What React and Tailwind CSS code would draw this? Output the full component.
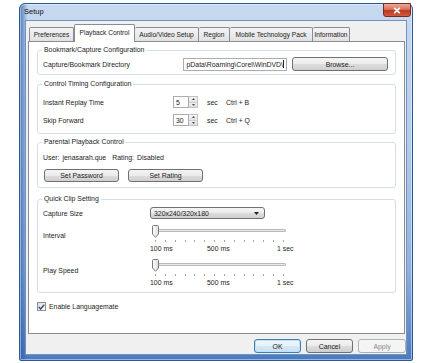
import React from "react";

const btnBg =
  "border border-[#707070] rounded-[3px] bg-[linear-gradient(to_bottom,#f4f4f4_0%,#ebebeb_50%,#dddddd_51%,#cfcfcf_100%)]";

function Group({ title, className, children }) {
  return (
    <fieldset className={`border border-[#d5dfe5] rounded-[3px] ${className}`}>
      <legend className="ml-[4px] px-[2px] leading-[10px]">{title}</legend>
      {children}
    </fieldset>
  );
}

function Spin({ value }) {
  return (
    <div className="flex h-[12px]">
      <div className="w-[16px] h-[12px] border border-[#abadb3] bg-white flex items-center pl-[2px] leading-[9px]">
        {value}
      </div>
      <div className="w-[9px] h-[12px] flex flex-col border border-l-0 border-[#c3c3c3]">
        <div className="flex-1 flex items-center justify-center bg-[linear-gradient(to_bottom,#f7f7f7,#e2e2e2)] border-b border-[#cfcfcf]">
          <svg width="3" height="2" viewBox="0 0 3 2"><path d="M0 2 L1.5 0 L3 2Z" fill="#4d4d4d" /></svg>
        </div>
        <div className="flex-1 flex items-center justify-center bg-[linear-gradient(to_bottom,#f0f0f0,#dedede)]">
          <svg width="3" height="2" viewBox="0 0 3 2"><path d="M0 0 L1.5 2 L3 0Z" fill="#4d4d4d" /></svg>
        </div>
      </div>
    </div>
  );
}

function TimingRow({ label, value, keys }) {
  return (
    <div className="flex items-center h-[12px]">
      <span className="w-[130px]">{label}</span>
      <Spin value={value} />
      <span className="ml-[9px] w-[19px]">sec</span>
      <span>{keys}</span>
    </div>
  );
}

function Slider({ label, labelPad }) {
  return (
    <div className="flex">
      <span className={`w-[107px] ${labelPad}`}>{label}</span>
      <div className="flex flex-col w-[136px]">
        <div className="grid h-[13px]">
          <div className="[grid-area:1/1] self-start mt-[4px] ml-[2px] h-[3px] border border-[#b9b9b9] bg-[#e9e9e9] rounded-[1px]" />
          <svg className="[grid-area:1/1] ml-[2px]" width="7" height="13" viewBox="0 0 7 13">
            <defs>
              <linearGradient id="th" x1="0" y1="0" x2="1" y2="0">
                <stop offset="0" stopColor="#ffffff" />
                <stop offset="1" stopColor="#dcdcdc" />
              </linearGradient>
            </defs>
            <path
              d="M1.5 0.5 H5.5 Q6.5 0.5 6.5 1.5 V9 L3.5 12.3 L0.5 9 V1.5 Q0.5 0.5 1.5 0.5Z"
              fill="url(#th)"
              stroke="#7a7a7a"
              strokeWidth="1"
            />
          </svg>
        </div>
        <div className="flex justify-between w-[129px] ml-[5px] mt-[2px] h-[2px]">
          {Array.from({ length: 14 }).map((_, i) => (
            <div key={i} className="w-px h-[2px] bg-[#a5a5a5]" />
          ))}
        </div>
        <div className="flex mt-[2px] leading-[9px] whitespace-nowrap">
          <span className="w-[57px] shrink-0">100 ms</span>
          <span className="w-[70px] shrink-0">500 ms</span>
          <span className="shrink-0">1 sec</span>
        </div>
      </div>
    </div>
  );
}

const tabs = [
  { t: "Preferences", w: "w-[45px]" },
  { t: "Playback Control", w: "w-[61px]", active: true },
  { t: "Audio/Video Setup", w: "w-[64px]" },
  { t: "Region", w: "w-[31px]" },
  { t: "Mobile Technology Pack", w: "w-[83px]" },
  { t: "Information", w: "w-[37px]" },
];

export default function App() {
  return (
    <div
      className="w-[433px] h-[363px] bg-white overflow-hidden pl-[19px] pt-[3px] text-[6.9px] leading-[9px] text-[#1b1b1b]"
      style={{ fontFamily: '"Liberation Sans", Arial, sans-serif' }}
    >
      <div className="w-[394px] h-[358px] rounded-t-[6px] rounded-b-[2px] border border-[#2b5892] bg-[linear-gradient(to_right,rgba(40,92,170,0.75),rgba(40,92,170,0)_2%),linear-gradient(to_bottom,#c6d9ef_0%,#b3cbe9_40%,#8fb1de_75%,#4a7bbf_100%)] flex flex-col shadow-[inset_0_0_0_1px_rgba(255,255,255,0.45)]">
        <div className="h-[16px] flex items-start justify-between pl-[4px] pr-[1px]">
          <span className="text-[7.5px] leading-[14px] mt-[1px] text-[#111]">Setup</span>
          <div className="w-[28px] h-[14px] -mt-px rounded-b-[3px] border border-[#7a2a1e] bg-[linear-gradient(to_bottom,#e9a99b_0%,#d8705b_45%,#c0371f_55%,#cf5b3e_100%)] flex items-center justify-center">
            <svg width="8" height="7" viewBox="0 0 8 7">
              <path d="M1.2 0.8 L6.8 6.2 M6.8 0.8 L1.2 6.2" stroke="#fff" strokeWidth="1.7" />
            </svg>
          </div>
        </div>
        <div className="flex-1 mx-[5px] mb-[5px] border border-[#6f92c0] bg-[#f0f0f0] flex flex-col">
          <div className="h-[20px] flex items-end pl-[3px] relative z-10 text-[6.6px]">
            {tabs.map((tab) =>
              tab.active ? (
                <div
                  key={tab.t}
                  className={`${tab.w} shrink-0 h-[18px] -mb-px bg-white border border-b-0 border-[#898c95] rounded-t-[2px] flex items-start justify-center pt-[3px] whitespace-nowrap`}
                >
                  {tab.t}
                </div>
              ) : (
                <div
                  key={tab.t}
                  className={`${tab.w} shrink-0 h-[14px] border border-b-0 border-l-0 first:border-l border-[#898c95] rounded-t-[2px] bg-[linear-gradient(to_bottom,#f4f4f4,#e1e1e1)] flex items-center justify-center whitespace-nowrap`}
                >
                  {tab.t}
                </div>
              )
            )}
          </div>
          <div className="ml-[2px] w-[377px] h-[293px] border border-[#898c95] bg-white px-[8px] pt-[3px] flex flex-col">
            <Group title="Bookmark/Capture Configuration" className="h-[30px]">
              <div className="flex items-center mt-[2px] pl-[5px]">
                <span className="w-[140px]">Capture/Bookmark Directory</span>
                <div className="w-[104px] h-[13px] border border-[#abadb3] bg-white flex items-center justify-end pr-[2px] overflow-hidden whitespace-nowrap">
                  <span>pData\Roaming\Corel\WinDVD\</span>
                  <span className="w-px h-[8px] bg-[#222] shrink-0" />
                </div>
                <div className={`ml-[5px] w-[96px] h-[14px] ${btnBg} flex items-center justify-center`}>Browse...</div>
              </div>
            </Group>

            <Group title="Control Timing Configuration" className="h-[55px] mt-[4px]">
              <div className="flex flex-col gap-[6px] mt-[7px] pl-[5px]">
                <TimingRow label="Instant Replay Time" value="5" keys="Ctrl + B" />
                <TimingRow label="Skip Forward" value="30" keys="Ctrl + Q" />
              </div>
            </Group>

            <Group title="Parental Playback Control" className="h-[51px] mt-[3px]">
              <div className="flex mt-[6px] pl-[5px] whitespace-nowrap">
                <span>User:</span>
                <span className="ml-[3px]">jenasarah.que</span>
                <span className="ml-[6px]">Rating:</span>
                <span className="ml-[3px]">Disabled</span>
              </div>
              <div className="flex gap-[9px] mt-[7px] pl-[6px]">
                <div className={`w-[75px] h-[13px] ${btnBg} flex items-center justify-center`}>Set Password</div>
                <div className={`w-[75px] h-[13px] ${btnBg} flex items-center justify-center`}>Set Rating</div>
              </div>
            </Group>

            <Group title="Quick Clip Setting" className="h-[99px] mt-[6px]">
              <div className="flex flex-col pl-[5px]">
                <div className="flex items-center mt-[3px]">
                  <span className="w-[107px]">Capture Size</span>
                  <div className={`w-[115px] h-[12px] ${btnBg} flex items-center justify-between pl-[3px] pr-[5px]`}>
                    <span>320x240/320x180</span>
                    <svg width="5" height="3" viewBox="0 0 5 3"><path d="M0 0 H5 L2.5 3Z" fill="#222" /></svg>
                  </div>
                </div>
                <div className="mt-[6px]">
                  <Slider label="Interval" labelPad="pt-[6px]" />
                </div>
                <div className="mt-[6px]">
                  <Slider label="Play Speed" labelPad="pt-[7px]" />
                </div>
              </div>
            </Group>

            <div className="flex items-center mt-[9px]">
              <div className="w-[9px] h-[9px] border border-[#8e8f8f] bg-[linear-gradient(135deg,#dcdcdc,#ffffff)] flex items-center justify-center">
                <svg width="7" height="6" viewBox="0 0 7 6">
                  <path d="M0.8 3 L2.7 5 L6.2 0.8" stroke="#33477a" strokeWidth="1.4" fill="none" />
                </svg>
              </div>
              <span className="ml-[3px]">Enable Languagemate</span>
            </div>
          </div>

          <div className="flex justify-end gap-[5px] mt-[5px] h-[14px]">
            <div className="w-[47px] h-[14px] border border-[#3c7fb1] rounded-[3px] bg-[linear-gradient(to_bottom,#f2f8fc_0%,#e6f1f9_50%,#d6e8f5_51%,#c8e0f2_100%)] shadow-[inset_0_0_0_1px_#bfe2f8] flex items-center justify-center">
              OK
            </div>
            <div className={`w-[47px] h-[14px] ${btnBg} flex items-center justify-center`}>Cancel</div>
            <div className="w-[48px] h-[14px] border border-[#adb2b5] rounded-[3px] bg-[#f4f4f4] text-[#8a8a8a] flex items-center justify-center">
              Apply
            </div>
          </div>
        </div>
      </div>
    </div>
  );
}
